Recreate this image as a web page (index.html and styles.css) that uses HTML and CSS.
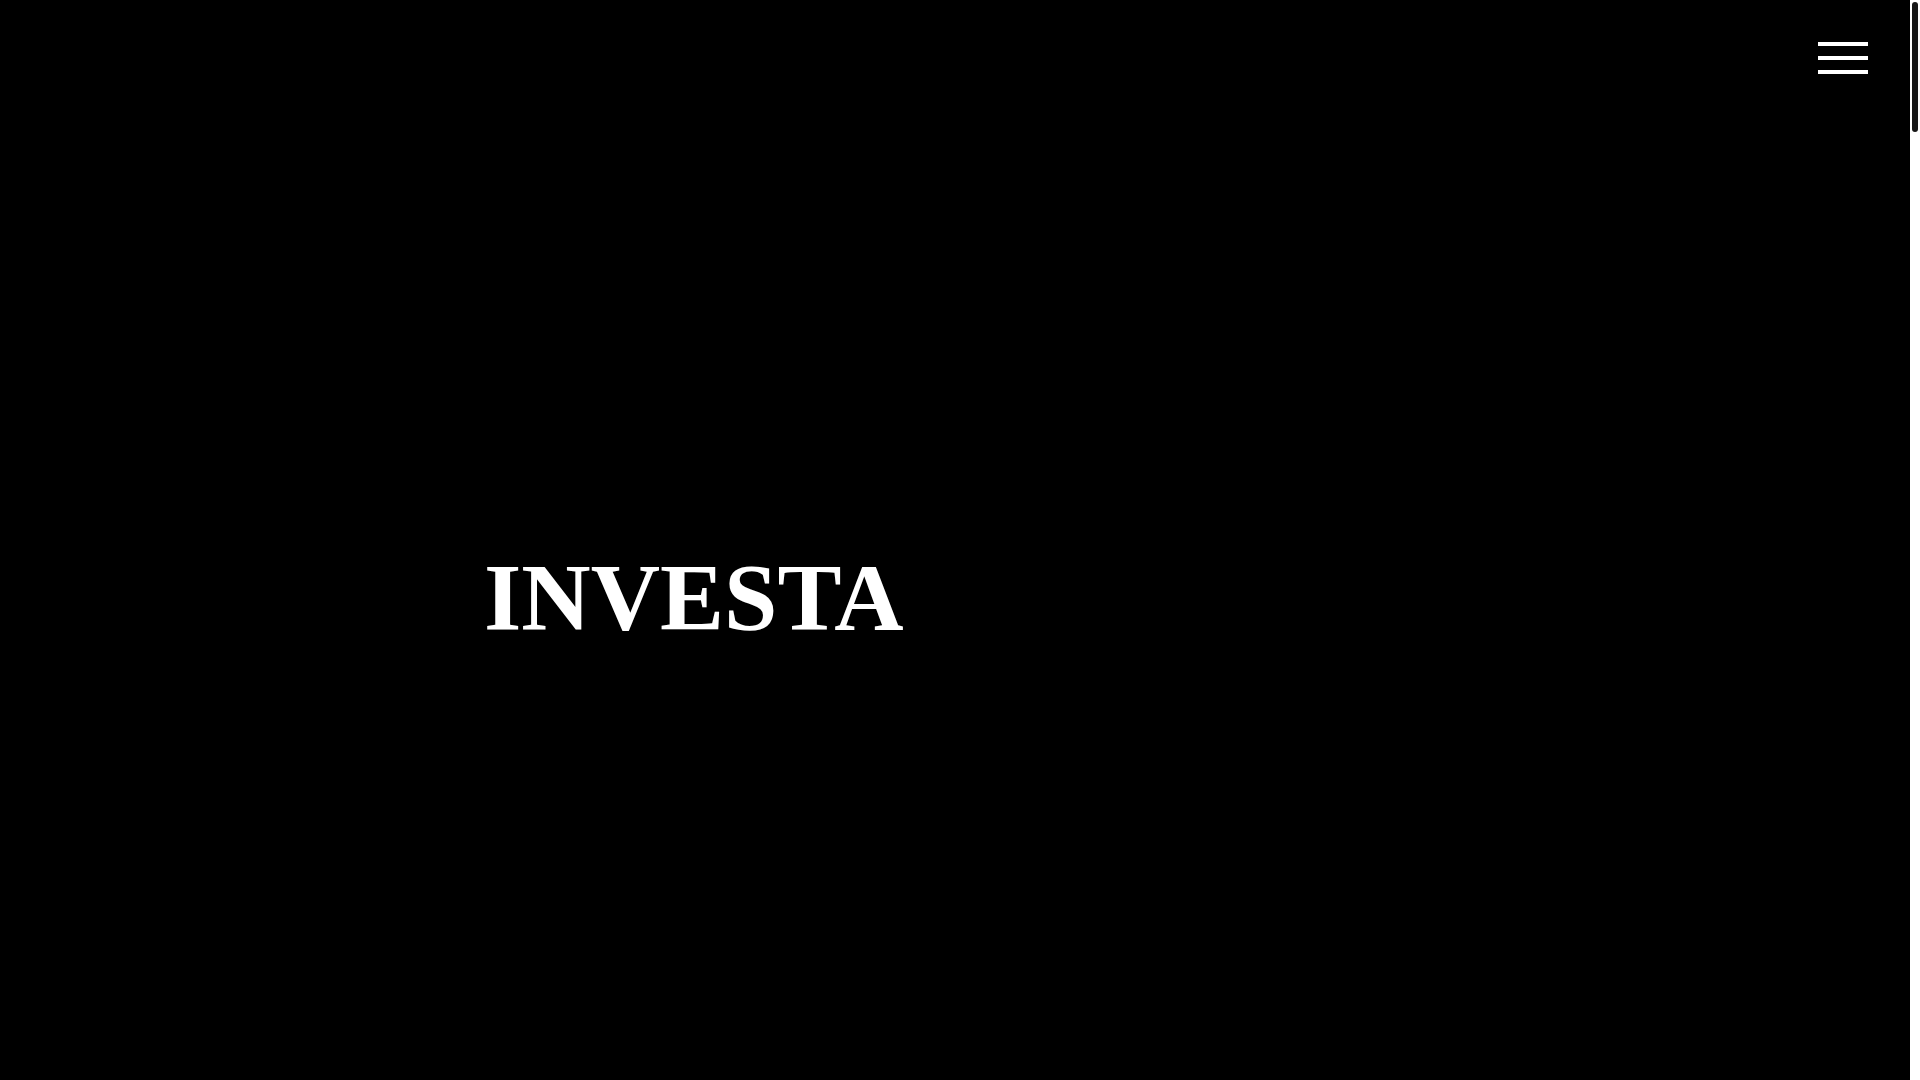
FILE: index.html
```html
<!DOCTYPE html>
<html lang="en">
<head>
<meta charset="utf-8">
<title>INVESTA</title>
<link rel="stylesheet" href="styles.css">
</head>
<body>
<div class="frame">
  <main class="page">
    <button class="menu-toggle" aria-label="Menu">
      <span class="menu-line"></span>
      <span class="menu-line"></span>
      <span class="menu-line"></span>
    </button>
    <section class="hero">
      <h1 class="hero-title">INVESTA</h1>
    </section>
  </main>
  <div class="scrollbar" aria-hidden="true">
    <div class="scrollbar-thumb"></div>
  </div>
</div>
</body>
</html>
```
FILE: styles.css
```css
html,
body {
  margin: 0;
  height: 100%;
  overflow: hidden;
  background: #000;
}
body {
  color: #fff;
  font-family: "Liberation Serif", "Times New Roman", serif;
}
.frame {
  display: flex;
  height: 100vh;
}
.page {
  position: relative;
  flex: 1;
  background: #000;
}
.menu-toggle {
  position: absolute;
  top: 42px;
  right: 42px;
  width: 50px;
  padding: 0;
  margin: 0;
  border: 0;
  background: transparent;
  display: flex;
  flex-direction: column;
  gap: 10px;
  cursor: pointer;
}
.menu-line {
  display: block;
  width: 50px;
  height: 4px;
  background: #fff;
}
.hero {
  height: 100%;
  box-sizing: border-box;
  padding: 114px 0 0 484px;
  display: flex;
  flex-direction: column;
  justify-content: center;
}
.hero-title {
  margin: 0;
  font-size: 96px;
  font-weight: 700;
  line-height: normal;
}
.scrollbar {
  width: 10px;
  flex: none;
  background: #fff;
  padding: 2px;
  box-sizing: border-box;
}
.scrollbar-thumb {
  height: 130px;
  border-radius: 3px;
  background: #161616;
}
```
